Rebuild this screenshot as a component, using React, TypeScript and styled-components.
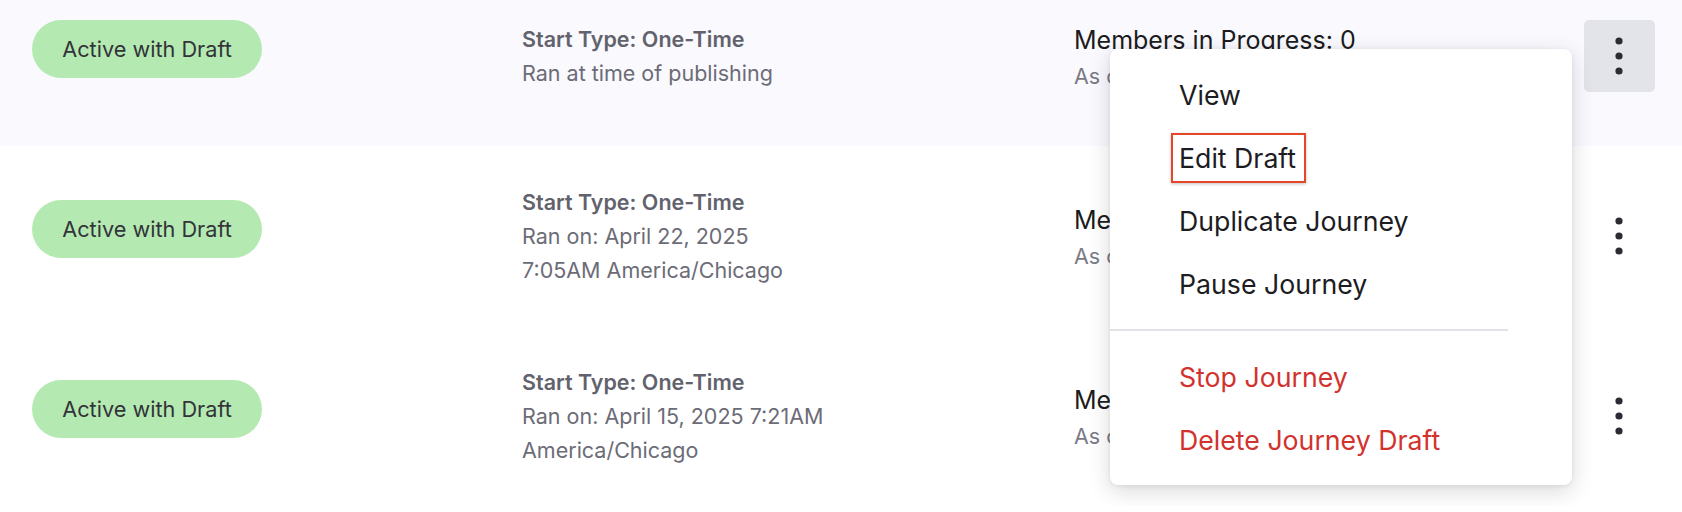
import React from 'react';
import styled, { createGlobalStyle } from 'styled-components';

const GlobalStyle = createGlobalStyle`
    html, body {
        margin: 0;
        padding: 0;
        background: #ffffff;
    }

    body {
        font-family: Inter, "Noto Sans", sans-serif;
        overflow: hidden;
    }
`

type Journey = {
    id: number;
    startLines: string[];
    asOf: string;
    highlighted?: boolean;
    menuOpen?: boolean;
};

const journeys: Journey[] = [
    {id: 1, startLines: ['Ran at time of publishing'], asOf: 'As of 04/28/2025', highlighted: true, menuOpen: true},
    {id: 2, startLines: ['Ran on: April 22, 2025', '7:05AM America/Chicago'], asOf: 'As of 04/28/2025'},
    {id: 3, startLines: ['Ran on: April 15, 2025 7:21AM', 'America/Chicago'], asOf: 'As of 04/28/2025'},
];

const menuItems = [
    {label: 'View'},
    {label: 'Edit Draft', marked: true},
    {label: 'Duplicate Journey'},
    {label: 'Pause Journey'},
];

const dangerItems = ['Stop Journey', 'Delete Journey Draft'];

const KebabIcon = () => (
    <svg width="8" height="38" viewBox="0 0 8 38">
        <circle cx="4" cy="4" r="3.6" fill="#2b2b33"/>
        <circle cx="4" cy="19" r="3.6" fill="#2b2b33"/>
        <circle cx="4" cy="34" r="3.6" fill="#2b2b33"/>
    </svg>
);

export default function App() {
    return (
        <>
            <GlobalStyle/>
            <List>
                {journeys.map(j => (
                    <Row key={j.id} highlighted={j.highlighted}>
                        <StatusCell>
                            <Pill>Active with Draft</Pill>
                        </StatusCell>
                        <StartCell>
                            <StartTitle>Start Type: One-Time</StartTitle>
                            {j.startLines.map(line => (
                                <StartLine key={line}>{line}</StartLine>
                            ))}
                        </StartCell>
                        <MembersCell>
                            <MembersCount>Members in Progress: 0</MembersCount>
                            <AsOf>{j.asOf}</AsOf>
                        </MembersCell>
                        <ActionCell>
                            <KebabButton active={j.menuOpen}>
                                <KebabIcon/>
                            </KebabButton>
                            {j.menuOpen && (
                                <Menu>
                                    {menuItems.map(item => (
                                        <MenuItem key={item.label}>
                                            {item.marked ? <Marked>{item.label}</Marked> : item.label}
                                        </MenuItem>
                                    ))}
                                    <Divider/>
                                    {dangerItems.map(label => (
                                        <MenuItem key={label} danger>{label}</MenuItem>
                                    ))}
                                </Menu>
                            )}
                        </ActionCell>
                    </Row>
                ))}
            </List>
        </>
    );
}

const List = styled.div`
    display: flex;
    flex-direction: column;
    margin-top: -34px;
`

const Row = styled.div<{ highlighted?: boolean }>`
    display: grid;
    grid-template-columns: 490px 552px 1fr 72px;
    align-items: center;
    height: 180px;
    padding: 0 27px 0 32px;
    background: ${props => props.highlighted ? '#f9f9fe' : '#ffffff'};
`

const StatusCell = styled.div`
    display: flex;
    align-items: center;
    padding-bottom: 14px;
`

const Pill = styled.span`
    display: inline-flex;
    align-items: center;
    justify-content: center;
    width: 230px;
    height: 58px;
    border-radius: 29px;
    background: #b4eab1;
    color: #33333a;
    font-size: 21.7px;
    font-weight: 400;
`

const StartCell = styled.div`
    display: flex;
    flex-direction: column;
    font-size: 21.5px;
    line-height: 34px;
    color: #6c6c77;
`

const StartTitle = styled.span`
    font-weight: 600;
    color: #62626d;
`

const StartLine = styled.span`
    font-weight: 400;
`

const MembersCell = styled.div`
    display: flex;
    flex-direction: column;
    gap: 7px;
    padding-top: 3px;
`

const MembersCount = styled.span`
    font-size: 25px;
    line-height: 30px;
    color: #1b1b20;
`

const AsOf = styled.span`
    font-size: 21.5px;
    line-height: 28px;
    color: #7a7a85;
`

const ActionCell = styled.div`
    position: relative;
    display: flex;
    justify-content: center;
    align-items: center;
`

const KebabButton = styled.button<{ active?: boolean }>`
    display: flex;
    align-items: center;
    justify-content: center;
    flex-shrink: 0;
    width: 71px;
    height: 72px;
    padding: 0;
    border: none;
    border-radius: 5px;
    background: ${props => props.active ? '#e3e3ea' : 'transparent'};
    cursor: pointer;
`

const Menu = styled.div`
    position: absolute;
    top: 29px;
    right: calc(100% + 11px);
    width: 462px;
    padding: 14px 0;
    background: #ffffff;
    border-radius: 8px;
    box-shadow: 0 6px 22px rgba(20, 20, 40, 0.16), 0 1px 4px rgba(20, 20, 40, 0.08);
    z-index: 10;
`

const MenuItem = styled.div<{ danger?: boolean }>`
    display: flex;
    align-items: center;
    height: 63px;
    padding-left: 69px;
    font-size: 26.7px;
    color: ${props => props.danger ? '#d2322e' : '#1c1c22'};
`

const Marked = styled.span`
    display: inline-block;
    padding: 7px 8px 7px 6px;
    margin: -9px -10px -9px -8px;
    border: 2px solid #e5472b;
    box-shadow: 0 1px 3px rgba(0, 0, 0, 0.25);
`

const Divider = styled.div`
    width: calc(100% - 64px);
    height: 2px;
    margin: 14px 0;
    background: #e1e1e8;
`
